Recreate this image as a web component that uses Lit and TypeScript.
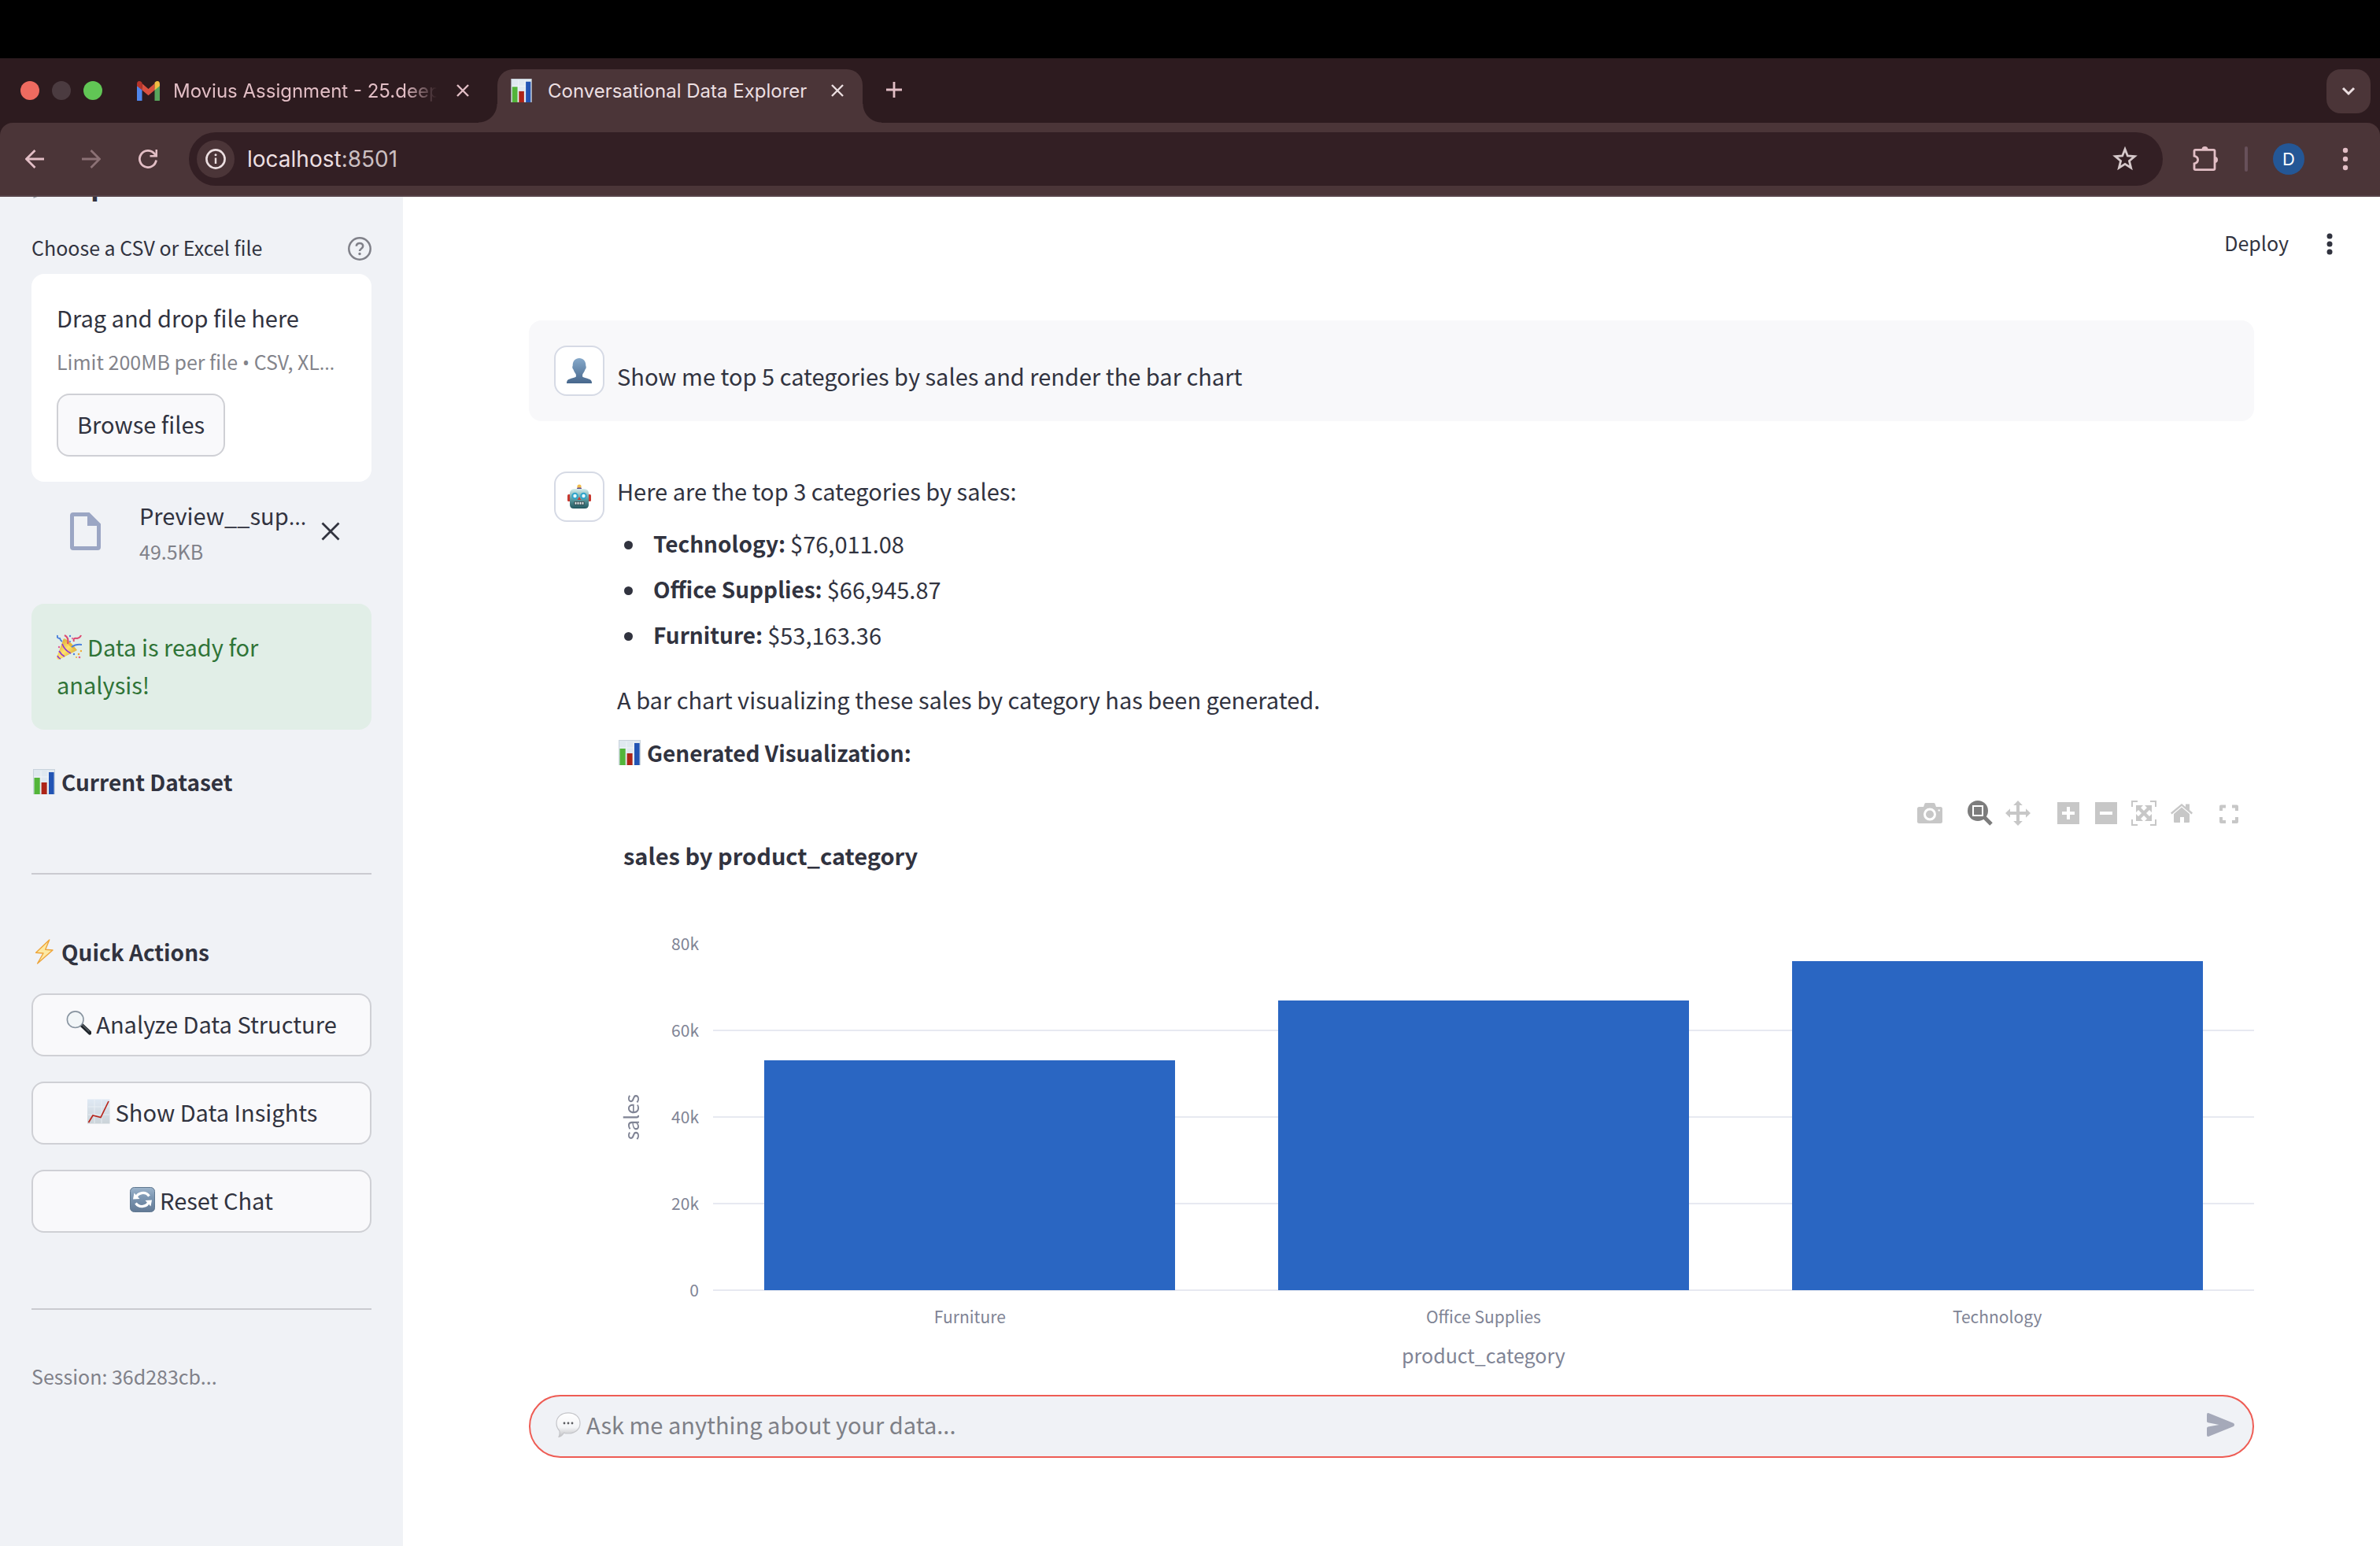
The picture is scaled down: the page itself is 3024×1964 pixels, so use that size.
import { LitElement, html, css, svg, TemplateResult } from "lit";
import { customElement } from "lit/decorators.js";

const ink = "#31333f";

/* Small colour pictograms, all on a 32 x 32 grid. */
const pictograms: Record<string, TemplateResult> = {
  chart: svg`
    <rect x="2.5" y="0.5" width="27" height="31" fill="#dfe8f0" stroke="#c9d3dc"/>
    <path d="M12 2v30M21 2v30M3 10h26M3 20h26" stroke="#f2f6fa" stroke-width="0.8"/>
    <rect x="3.5" y="11" width="7.2" height="21" fill="#53b53a"/>
    <rect x="12.6" y="17" width="7" height="15" fill="#ad2418"/>
    <rect x="22" y="4" width="6.6" height="28" fill="#2254b4"/>`,
  party: svg`
    <defs><linearGradient id="cone" x1="0" y1="0" x2="1" y2="1"><stop offset="0" stop-color="#c98f1b"/><stop offset="0.5" stop-color="#ffe36e"/><stop offset="1" stop-color="#c58a17"/></linearGradient></defs>
    <path d="M9 5 26 20 3 32Q0 32 0 29Z" fill="url(#cone)"/>
    <path d="M7 12q3 8 11 12M3 21q3 5 7 7M1 27q1 3 4 4" fill="none" stroke="#8a35d6" stroke-width="1.6"/>
    <path d="M10 5q8 4 16 15-11-3-16-15z" fill="#e8b83c"/>
    <path d="M10 1q6 3 4 11M22 9q-2-5 4-4 4-1 5-4" fill="none" stroke="#dc4a72" stroke-width="2"/>
    <path d="M1 1q-1 4 3 4 1 3 3 4M19 16q5-4 13-3" fill="none" stroke="#4a7fdc" stroke-width="2"/>
    <g fill="#4a7fdc"><circle cx="17" cy="2" r="1.2"/><circle cx="22" cy="25" r="1.2"/><circle cx="17" cy="9" r="1"/></g>
    <g fill="#f0a832"><circle cx="28" cy="25" r="1.3"/><circle cx="31" cy="21" r="1.2"/><circle cx="25" cy="29" r="1"/></g>
    <g fill="#e05a94"><circle cx="29" cy="29" r="1.3"/><circle cx="3" cy="16" r="1.2"/><circle cx="20" cy="5" r="1.1"/></g>`,
  bolt: svg`<path d="M22.7 1 5.6 17.3 15 18 7.6 31 27 14 17.7 13.3Z" fill="#fde9a2" stroke="#eda43a" stroke-width="1.4" stroke-linejoin="round"/>`,
  lens: svg`
    <path d="m20 18.5 10 9.5" stroke="#20262b" stroke-width="5" stroke-linecap="round"/>
    <path d="m21 18.5 8 7.5" stroke="#5d666d" stroke-width="1.2" stroke-linecap="round"/>
    <circle cx="11.7" cy="11.2" r="10.3" fill="#f2f6f8" stroke="#8894a0" stroke-width="1.6"/>`,
  trend: svg`
    <defs><linearGradient id="sheet" x1="0" y1="0" x2="0" y2="1"><stop offset="0" stop-color="#dfe9f4"/><stop offset="1" stop-color="#cbd3d8"/></linearGradient></defs>
    <rect x="2" y="0.5" width="28.5" height="31" fill="url(#sheet)"/>
    <path d="M11 1v30M20 1v30M3 10h27M3 20h27" stroke="#edf3f8" stroke-width="0.8"/>
    <path d="M3.5 30 9 21l10 2.6L29 3" fill="none" stroke="#b8261c" stroke-width="1.7"/>`,
  reset: svg`
    <defs><linearGradient id="key" x1="0" y1="0" x2="0" y2="1"><stop offset="0" stop-color="#9db4cb"/><stop offset="0.4" stop-color="#7d97b3"/><stop offset="1" stop-color="#627a96"/></linearGradient></defs>
    <rect x="0.5" y="0.5" width="31" height="31" rx="5" fill="url(#key)" stroke="#607890"/>
    <path d="M7.5 14.5C9.5 6.5 20 5 24.5 11.5M24.5 17.5C22.5 25.5 12 27 7.5 20.5" fill="none" stroke="#fff" stroke-width="3.2"/>
    <path d="M4 15.5 5.5 7.5l7 7.5zM28 16.5l-1.5 8-7-7.5z" fill="#fff"/>`,
  person: svg`
    <defs><linearGradient id="bust" x1="0" y1="0" x2="0" y2="1"><stop offset="0" stop-color="#86a9ca"/><stop offset="1" stop-color="#47678c"/></linearGradient></defs>
    <path d="M16 0c5 0 8.3 3.5 8.3 9 0 1.6.7 1.6.4 3-.3 1.5-1 2-1.3 2.6-.8 3-2.4 4.6-3.1 5.9-.3 1-.3 2.5 0 3.3 2 1.7 10.2 2.2 11.2 5.2.4 1.2.5 2 .5 3H0c0-1 .1-1.8.5-3 1-3 9.2-3.5 11.2-5.2.3-.8.3-2.3 0-3.3-.7-1.3-2.3-2.9-3.1-5.9-.3-.6-1-1.1-1.3-2.6-.3-1.4.4-1.4.4-3C7.7 3.5 11 0 16 0Z" fill="url(#bust)"/>`,
  robot: svg`
    <defs><linearGradient id="head" x1="0" y1="0" x2="0" y2="1"><stop offset="0" stop-color="#d9eeec"/><stop offset="0.5" stop-color="#5fa0a5"/><stop offset="1" stop-color="#22565e"/></linearGradient></defs>
    <circle cx="16" cy="3" r="2.6" fill="#f3bd4d"/><path d="M13.5 4.5h5L20 8h-8z" fill="#5d4a8c"/>
    <rect x="1" y="13" width="4" height="9" rx="1.5" fill="#c9382f"/><rect x="27" y="13" width="4" height="9" rx="1.5" fill="#c9382f"/>
    <path d="M9 6h14q5 1 5 6v14q0 5-5 5H9q-5 0-5-5V12q0-5 5-6z" fill="url(#head)"/>
    <circle cx="10.5" cy="15" r="4.2" fill="#2fa4cb"/><circle cx="21.5" cy="15" r="4.2" fill="#2fa4cb"/>
    <circle cx="10.5" cy="15" r="2.2" fill="#e8fbff"/><circle cx="21.5" cy="15" r="2.2" fill="#e8fbff"/>
    <path d="m16 16 2.2 4h-4.4z" fill="#c9382f"/>
    <rect x="9.5" y="22" width="13" height="4.5" rx="1" fill="#2b3c40"/>
    <path d="M10.5 24.2h11" stroke="#e4eef0" stroke-width="3" stroke-dasharray="2 1"/>`,
  bubble: svg`
    <defs><linearGradient id="balloon" x1="0" y1="0" x2="0" y2="1"><stop offset="0" stop-color="#fff"/><stop offset="0.6" stop-color="#f4f5f7"/><stop offset="1" stop-color="#bfc0c3"/></linearGradient></defs>
    <path d="M16 .8C24.5.8 31 6 31 14S24.500 27 16 27c-2 0-4-.2-5.500-.8C9 28.5 6.500 31 4 31.500c1-2 1.500-4.500.8-8C2.500 21 1 18 1 14 1 6 7.500.8 16 .8Z" fill="url(#balloon)" stroke="#c4c5c9" stroke-width="1.2"/>
    <g fill="#5d5e62"><circle cx="11" cy="14" r="1.4"/><circle cx="16" cy="14" r="1.4"/><circle cx="21" cy="14" r="1.4"/></g>`,
  folder: svg`<path d="M2 6h10l3 3h15v14L12 28l-10 4z" fill="#9aa0aa"/>`,
};

const pic = (name: string, size = 32) =>
  html`<svg class="pic" width=${size} height=${size} viewBox="0 0 32 32" aria-hidden="true">${pictograms[name]}</svg>`;

/* Chart toolbar buttons, in visual groups. */
const modebar: { label: string; active?: boolean; shape: TemplateResult }[][] = [
  [
    {
      label: "Download plot as a png",
      shape: svg`<path fill-rule="evenodd" d="M2.5 8H8l1.5-4.2Q10 3 11 3h10q1 0 1.5.8L24 8h5.5Q32 8 32 10.5v16q0 2.500-2.500 2.500h-27Q0 29 0 26.500v-16Q0 8 2.500 8ZM16 9.500a8 8 0 1 0 0 16 8 8 0 0 0 0-16Zm11.700 1.700a1.200 1.200 0 1 0 0 2.400 1.200 1.200 0 0 0 0-2.400Z"/><circle cx="16" cy="17.500" r="5"/>`,
    },
  ],
  [
    {
      label: "Zoom",
      active: true,
      shape: svg`<circle cx="13" cy="13" r="13"/><rect x="7" y="7" width="12" height="12" fill="none" stroke="#fff" stroke-width="2"/><path d="m20 20 10 10" stroke="currentColor" stroke-width="5"/>`,
    },
    {
      label: "Pan",
      shape: svg`<path d="m16 0 5.8 6H18v8h8v-3.8l6 5.8-6 5.8V18h-8v8h3.8L16 32l-5.8-6H14v-8H6v3.8L0 16l6-5.8V14h8V6h-3.8z"/>`,
    },
  ],
  [
    { label: "Zoom in", shape: svg`<path fill-rule="evenodd" d="M2 2h28v28H2zM14 8v6H8v4h6v6h4v-6h6v-4h-6V8z"/>` },
    { label: "Zoom out", shape: svg`<path fill-rule="evenodd" d="M2 2h28v28H2zM8 14v4h16v-4z"/>` },
    {
      label: "Autoscale",
      shape: svg`<path d="M1 8V1h7M24 1h7v7M31 24v7h-7M8 31H1v-7" fill="none" stroke="currentColor" stroke-width="2"/><path d="M6 6h9l-3 3 4 4 4-4-3-3h9v9l-3-3-4 4 4 4 3-3v9h-9l3-3-4-4-4 4 3 3H6v-9l3 3 4-4-4-4-3 3z"/>`,
    },
    {
      label: "Reset axes",
      shape: svg`<path d="M16 8.5 26 17v10q0 1-1 1h-6v-7h-5v7H7q-1 0-1-1V17zM16 4l5 4V4.500h5V12l4 3.500-1.500 2L16 7 3.500 17.500 2 15.500z"/>`,
    },
  ],
  [
    {
      label: "Fullscreen",
      shape: svg`<path d="M6 13V7.500h6M20 7.500h6V13M26 21v6h-6M12 27H6v-6" fill="none" stroke="currentColor" stroke-width="4" stroke-linejoin="round"/>`,
    },
  ],
];

const sales = [
  { category: "Furniture", value: 53163.36 },
  { category: "Office Supplies", value: 66945.87 },
  { category: "Technology", value: 76011.08 },
];
const axisMax = 80000;

@customElement("browser-chrome")
class BrowserChrome extends LitElement {
  static styles = css`
    :host { display: block; flex: none; background: #2d1b1f; font-family: Inter, "Liberation Sans", sans-serif; color: #ecdfe1; }
    button { border: 0; padding: 0; background: none; color: inherit; font: inherit; display: flex; align-items: center; justify-content: center; }
    svg { display: block; flex: none; }
    .menubar { height: 74px; background: #000; }
    .strip { display: flex; height: 68px; padding: 14px 12px 0 26px; }
    .lights { display: flex; align-items: center; gap: 16px; height: 54px; margin-right: 44px; }
    .light { width: 24px; height: 24px; border-radius: 50%; background: #4b3b40; }
    .close { background: #ee6b60; }
    .grow { background: #61c655; }
    .tab { display: flex; align-items: center; box-sizing: border-box; height: 68px; padding-bottom: 14px; font-size: 24px; line-height: 32px; white-space: nowrap; color: #e2bec5; }
    .name { flex: 1; padding-top: 2px; }
    .idle { width: 458px; gap: 17px; padding-right: 36px; }
    .idle .name { overflow: hidden; mask-image: linear-gradient(90deg, #000 88%, transparent 100%); }
    .idle .shut { margin-left: 8px; }
    .open { position: relative; width: 464px; padding-left: 17px; padding-right: 24px; border-radius: 20px 20px 0 0; background: #4b3538; color: #ecdfe1; }
    .open .name { margin-left: 20px; }
    .open::before, .open::after { content: ""; position: absolute; bottom: 0; width: 24px; height: 24px; }
    .open::before { right: 100%; background: radial-gradient(circle at 0 0, transparent 23px, #4b3538 24px); }
    .open::after { left: 100%; background: radial-gradient(circle at 100% 0, transparent 23px, #4b3538 24px); }
    .add { height: 52px; margin-left: 30px; color: #e2bec5; }
    .list { width: 56px; height: 56px; margin-left: auto; border-radius: 18px; background: #4b3538; }
    .toolbar { display: flex; align-items: center; height: 92px; padding: 0 40px 0 32px; border-radius: 16px 16px 0 0; border-bottom: 2px solid #574449; background: #4b3538; color: #e2bec5; }
    .nav { display: flex; gap: 48px; margin-right: 40px; }
    .off { color: #8b7175; }
    .omnibox { display: flex; flex: 1; align-items: center; height: 68px; padding: 0 32px 0 10px; border-radius: 34px; background: #331f24; }
    .info { width: 48px; height: 48px; border-radius: 50%; background: #4b3538; color: #ecdfe1; }
    .url { flex: 1; margin-left: 16px; font-size: 28px; line-height: 40px; color: #ecdfe1; text-decoration: none; }
    .port { color: #cbbfc1; }
    .star { color: #d5c8ca; }
    .puzzle { margin-left: 37px; }
    .rule { width: 4px; height: 32px; margin: 0 32px 0 33px; border-radius: 2px; background: #67505a; }
    .avatar { width: 40px; height: 40px; margin-right: 48px; border-radius: 50%; background: #245796; color: #fff; font-size: 22px; }
  `;

  private cross = html`<svg width="16" height="16" viewBox="0 0 16 16" aria-hidden="true"><path d="m1 1 14 14M15 1 1 15" stroke="currentColor" stroke-width="2.4"/></svg>`;

  render() {
    return html`
      <div class="menubar"></div>
      <div class="strip">
        <div class="lights">
          <button class="light close" aria-label="Close window"></button>
          <button class="light" aria-label="Minimize window"></button>
          <button class="light grow" aria-label="Zoom window"></button>
        </div>
        <div class="tab idle">
          <svg width="29" height="26" viewBox="0 -2 29 26" aria-hidden="true">
            <path d="M0 5v18q0 2 2 2h4.500V8z" fill="#4f86ec"/>
            <path d="M29 5v18q0 2-2 2h-4.500V8z" fill="#58a55c"/>
            <path d="M6.500 2 14.500 9l8-7v8.500l-8 6.700-8-6.700z" fill="#d95040"/>
            <path d="M0 3Q0-1 3-1q1.500 0 2.500 1l1 1V10.500L0 5.300z" fill="#b5342a"/>
            <path d="M29 3Q29-1 26-1q-1.500 0-2.500 1l-1 1V10.500L29 5.300z" fill="#f1bd42"/>
          </svg>
          <span class="name">Movius Assignment - 25.deep</span>
          <button class="shut" aria-label="Close tab">${this.cross}</button>
        </div>
        <div class="tab open">
          <svg width="27" height="30" viewBox="2 0 28 32" aria-hidden="true">${pictograms.chart}</svg>
          <span class="name">Conversational Data Explorer</span>
          <button aria-label="Close tab">${this.cross}</button>
        </div>
        <button class="add" aria-label="New tab">
          <svg width="20" height="20" viewBox="0 0 20 20"><path d="M10 0v20M0 10h20" stroke="currentColor" stroke-width="2.8"/></svg>
        </button>
        <button class="list" aria-label="Search tabs">
          <svg width="18" height="12" viewBox="0 0 18 12"><path d="m2 2 7 7 7-7" fill="none" stroke="#ecdfe1" stroke-width="3"/></svg>
        </button>
      </div>
      <div class="toolbar">
        <div class="nav">
          <button aria-label="Back"><svg width="24" height="24" viewBox="0 0 24 24"><path d="M24 12H2.500M12.500 1 1.500 12l11 11" fill="none" stroke="currentColor" stroke-width="2.8"/></svg></button>
          <button class="off" aria-label="Forward"><svg width="24" height="24" viewBox="0 0 24 24"><path d="M0 12h21.500M11.500 1l11 11-11 11" fill="none" stroke="currentColor" stroke-width="2.8"/></svg></button>
          <button aria-label="Reload"><svg width="24" height="24" viewBox="0 0 24 24"><path d="M22.500 13.500A10.600 10.600 0 1 1 20 5l2 2" fill="none" stroke="currentColor" stroke-width="2.8"/><path d="M24 0v9.500h-9.500V7h7V0z" fill="currentColor"/></svg></button>
        </div>
        <div class="omnibox">
          <button class="info" aria-label="View site information">
            <svg width="26" height="26" viewBox="0 0 26 26"><circle cx="13" cy="13" r="11.6" fill="none" stroke="currentColor" stroke-width="2.6"/><path d="M13 11.500V19" stroke="currentColor" stroke-width="2.4"/><circle cx="13" cy="7.8" r="1.5" fill="currentColor"/></svg>
          </button>
          <a class="url" href="http://localhost:8501">localhost<span class="port">:8501</span></a>
          <button class="star" aria-label="Bookmark this tab">
            <svg width="32" height="32" viewBox="0 0 32 32"><path d="m16 3.500 3.300 8.400 9 .7-6.900 5.800 2.200 8.800-7.600-4.800-7.600 4.800 2.200-8.800-6.900-5.800 9-.7z" fill="none" stroke="currentColor" stroke-width="2.8"/></svg>
          </button>
        </div>
        <button class="puzzle" aria-label="Extensions">
          <svg width="34" height="34" viewBox="0 0 34 34"><path d="M3 13.200V7q0-1.600 1.600-1.600h22.800Q29 5.400 29 7v22q0 1.600-1.600 1.600H4.600Q3 30.600 3 29v-6.200q4.600-1.200 4.600-4.800T3 13.200Z" fill="none" stroke="currentColor" stroke-width="2.8"/><path d="M12.500 5a4 4 0 0 1 8 0zM29 14a4 4 0 0 1 0 8z" fill="currentColor"/></svg>
        </button>
        <span class="rule"></span>
        <button class="avatar" aria-label="Profile">D</button>
        <button aria-label="Browser menu"><svg width="8" height="30" viewBox="0 0 8 30" fill="currentColor"><circle cx="4" cy="4" r="3.2"/><circle cx="4" cy="15" r="3.2"/><circle cx="4" cy="26" r="3.2"/></svg></button>
      </div>
    `;
  }
}

const sourceText = css`
  :host { font-family: "Noto Sans CJK SC", "Noto Sans", sans-serif; font-size: 29px; line-height: 48px; color: #31333f; }
  button { font: inherit; color: inherit; }
  svg { display: block; flex: none; }
  h2, h3, p, ul { margin: 0; padding: 0; }
  h3 { display: flex; align-items: center; gap: 6px; font-size: 28px; line-height: 48px; font-weight: 700; }
`;

@customElement("side-panel")
class SidePanel extends LitElement {
  static styles = [
    sourceText,
    css`
      :host { display: block; flex: none; box-sizing: border-box; width: 512px; padding: 0 40px; overflow: hidden; background: #f0f2f6; }
      .title { display: flex; align-items: center; gap: 8px; margin-top: -42px; font-size: 36px; line-height: 48px; }
      .field { display: flex; justify-content: space-between; height: 30px; margin-top: 45px; font-size: 25px; line-height: 26px; }
      .help { border: 0; padding: 0; background: none; color: #808189; }
      .drop { margin-top: 17px; padding: 32px; border-radius: 16px; background: #fff; }
      .lead { line-height: 46px; }
      .hint { margin-top: 12px; font-size: 25px; line-height: 42px; color: #83848b; white-space: nowrap; }
      .dots { font-family: "Open Sans", "Noto Sans", sans-serif; line-height: 0; }
      .btn { display: flex; align-items: center; justify-content: center; gap: 6px; box-sizing: border-box; height: 80px; padding: 0 24px 4px; border: 2px solid #cfd0d5; border-radius: 16px; background: #f9f9fb; white-space: nowrap; }
      .browse { margin-top: 20px; }
      .file { display: flex; align-items: center; margin-top: 19px; padding: 0 40px 0 48px; }
      .meta { flex: 1; margin-left: 49px; white-space: nowrap; }
      .size { margin-top: 5px; font-size: 25px; line-height: 36px; color: #808189; }
      .remove { border: 0; padding: 0; background: none; }
      .ready { margin-top: 49px; padding: 30px 32px 34px; border-radius: 16px; background: #e1eee7; color: #2f7437; }
      .ready .pic { display: inline-block; margin-right: 7px; vertical-align: -4px; }
      .dataset { margin-top: 42px; }
      .line { height: 2px; margin: 92px 0 0; border: 0; background: #cacbd0; }
      .quick { margin-top: 74px; }
      .actions { display: grid; gap: 32px; margin-top: 29px; }
      .last { margin-top: 96px; }
      .session { margin-top: 64px; font-size: 25px; line-height: 40px; color: #808189; }
    `,
  ];

  render() {
    return html`
      <h2 class="title">${pic("folder", 40)}Upload</h2>
      <div class="field">
        <span id="file-label">Choose a CSV or Excel file</span>
        <button class="help" aria-label="Help">
          <svg width="30" height="30" viewBox="0 0 30 30"><circle cx="15" cy="15" r="13.7" fill="none" stroke="currentColor" stroke-width="2.5"/><path d="M10.800 11.800Q11 8 15 8t4.200 3.600Q19.200 13.500 17 15q-2 1.400-2 3" fill="none" stroke="currentColor" stroke-width="2.6"/><circle cx="15" cy="21.5" r="1.7" fill="currentColor"/></svg>
        </button>
      </div>
      <section class="drop" aria-labelledby="file-label">
        <p class="lead">Drag and drop file here</p>
        <p class="hint">Limit 200MB per file <span class="dots">•</span> CSV, XL<span class="dots">…</span></p>
        <button class="btn browse">Browse files</button>
      </section>
      <div class="file">
        <svg width="40" height="50" viewBox="0 0 40 50"><path fill-rule="evenodd" d="M5 1h20.500L40 15.500V45q0 4-4 4H5q-4 0-4-4V5q0-4 4-4Zm1 5v38h29V18H23V6z" fill="#9ba6c4"/></svg>
        <div class="meta">
          <p class="lead">Preview__sup<span class="dots">…</span></p>
          <p class="size">49.5KB</p>
        </div>
        <button class="remove" aria-label="Remove file">
          <svg width="24" height="24" viewBox="0 0 24 24"><path d="m1.500 1.500 21 21M22.500 1.500l-21 21" stroke="currentColor" stroke-width="2.8"/></svg>
        </button>
      </div>
      <p class="ready">${pic("party")}Data is ready for analysis!</p>
      <h3 class="dataset">${pic("chart")}Current Dataset</h3>
      <hr class="line" />
      <h3 class="quick">${pic("bolt")}Quick Actions</h3>
      <div class="actions">
        <button class="btn">${pic("lens")}Analyze Data Structure</button>
        <button class="btn">${pic("trend")}Show Data Insights</button>
        <button class="btn">${pic("reset")}Reset Chat</button>
      </div>
      <hr class="line last" />
      <p class="session">Session: 36d283cb...</p>
    `;
  }
}

@customElement("sales-chart")
class SalesChart extends LitElement {
  static styles = [
    sourceText,
    css`
      :host { display: block; }
      .modebar { display: flex; justify-content: flex-end; gap: 16px; margin-top: 29px; padding-right: 8px; }
      .group { display: flex; }
      .group:last-child { margin-left: -4px; }
      .tool { display: flex; align-items: center; justify-content: center; width: 48px; height: 48px; padding: 0; border: 0; background: none; color: #c7c7c7; }
      .active { color: #7c7c7c; }
      .caption { padding-left: 8px; margin-top: 5px; font-size: 29px; }
      .figure { display: grid; grid-template-columns: 34px 70px minmax(0, 1fr); margin-top: 89px; color: #808495; }
      .yname { align-self: center; justify-self: center; font-size: 25px; line-height: 34px; writing-mode: vertical-rl; transform: rotate(180deg); }
      .ticks { display: flex; flex-direction: column; justify-content: space-between; margin: -16px 0 -14px; font-size: 21px; line-height: 30px; text-align: right; }
      .plot { display: grid; height: 440px; margin-left: 18px; }
      .rules, .bars { grid-area: 1 / 1; }
      .rules { display: grid; grid-template-rows: repeat(4, 110px); padding-top: 1px; }
      .rule { border-bottom: 2px solid #e7e9f1; }
      .bars { display: grid; grid-template-columns: repeat(3, 1fr); align-items: end; justify-items: center; height: 440px; }
      .bar { width: 80%; background: #2a66c2; }
      .names { display: grid; grid-column: 3; grid-template-columns: repeat(3, 1fr); margin: 18px 0 0 18px; font-size: 21px; line-height: 30px; text-align: center; }
      .xname { grid-column: 3; margin: 14px 0 0 18px; font-size: 25px; line-height: 40px; text-align: center; }
    `,
  ];

  render() {
    return html`
      <div class="modebar">
        ${modebar.map(
          (group) => html`<div class="group">
            ${group.map(
              (tool) => html`<button class="tool ${tool.active ? "active" : ""}" aria-label=${tool.label}>
                <svg width="32" height="32" viewBox="0 0 32 32" fill="currentColor">${tool.shape}</svg>
              </button>`
            )}
          </div>`
        )}
      </div>
      <h3 class="caption">sales by product_category</h3>
      <div class="figure">
        <span class="yname">sales</span>
        <div class="ticks">${["80k", "60k", "40k", "20k", "0"].map((t) => html`<span>${t}</span>`)}</div>
        <div class="plot">
          <div class="rules">${[60, 40, 20, 0].map(() => html`<span class="rule"></span>`)}</div>
          <div class="bars">
            ${sales.map((s) => html`<div class="bar" style="height:${(s.value / axisMax) * 100}%"></div>`)}
          </div>
        </div>
        <div class="names">${sales.map((s) => html`<span>${s.category}</span>`)}</div>
        <span class="xname">product_category</span>
      </div>
    `;
  }
}

@customElement("app-root")
class AppRoot extends LitElement {
  static styles = [
    sourceText,
    css`
      :host { display: flex; flex-direction: column; min-height: 100vh; background: #fff; }
      .body { display: flex; flex: 1; }
      main { display: flex; flex: 1; flex-direction: column; min-width: 0; }
      header { display: flex; align-items: center; justify-content: flex-end; gap: 28px; padding: 36px 40px 0 0; }
      .plain { display: flex; align-items: center; justify-content: center; height: 48px; padding: 0; border: 0; background: none; font-size: 25px; }
      .deploy { padding-bottom: 4px; }
      .more { width: 48px; }
      .thread { display: grid; gap: 32px; padding: 0 160px; margin-top: 73px; }
      .message { display: flex; gap: 16px; padding: 32px 0 0 32px; border-radius: 16px; }
      .user { height: 64px; padding: 32px; background: #f8f8fa; }
      .user .text { padding-top: 14px; }
      .face { display: flex; flex: none; align-items: center; justify-content: center; box-sizing: border-box; width: 64px; height: 64px; border: 2px solid #d6dae5; border-radius: 16px; background: #fff; }
      .text { flex: 1; min-width: 0; }
      ul { display: grid; gap: 10px; margin-top: 19px; list-style: none; }
      li { display: flex; align-items: center; padding-left: 9px; }
      li::before { content: ""; width: 11px; height: 11px; margin: 5px 26px 0 0; border-radius: 50%; background: #31333f; }
      li b { margin-right: 6px; font-size: 28px; }
      .after { margin-top: 34px; }
      .heading { margin-top: 20px; }
      .compose { margin-top: auto; padding: 0 160px 112px; }
      .pill { display: flex; align-items: center; gap: 7px; box-sizing: border-box; height: 80px; padding: 0 22px 4px 32px; border: 2px solid #ee5c54; border-radius: 40px; background: #f0f2f6; }
      input { flex: 1; min-width: 0; height: 48px; padding: 0 0 2px; border: 0; outline: 0; background: none; font: inherit; color: #31333f; }
      input::placeholder { color: #7e8087; opacity: 1; }
      .send { padding: 0; border: 0; background: none; }
    `,
  ];

  render() {
    return html`
      <browser-chrome></browser-chrome>
      <div class="body">
        <side-panel></side-panel>
        <main>
          <header>
            <button class="plain deploy">Deploy</button>
            <button class="plain more" aria-label="App menu">
              <svg width="8" height="28" viewBox="0 0 8 28" fill=${ink}><circle cx="4" cy="4" r="3.5"/><circle cx="4" cy="14" r="3.5"/><circle cx="4" cy="24" r="3.5"/></svg>
            </button>
          </header>
          <div class="thread">
            <article class="message user">
              <div class="face">${pic("person")}</div>
              <p class="text">Show me top 5 categories by sales and render the bar chart</p>
            </article>
            <article class="message">
              <div class="face">${pic("robot")}</div>
              <div class="text">
                <p>Here are the top 3 categories by sales:</p>
                <ul>
                  <li><b>Technology:</b>$76,011.08</li>
                  <li><b>Office Supplies:</b>$66,945.87</li>
                  <li><b>Furniture:</b>$53,163.36</li>
                </ul>
                <p class="after">A bar chart visualizing these sales by category has been generated.</p>
                <h3 class="heading">${pic("chart")}Generated Visualization:</h3>
                <sales-chart></sales-chart>
              </div>
            </article>
          </div>
          <div class="compose">
            <div class="pill">
              ${pic("bubble")}
              <input type="text" aria-label="Chat message" placeholder="Ask me anything about your data..." />
              <button class="send" aria-label="Send message">
                <svg width="36" height="30" viewBox="0 0 36 30"><path d="M2.500.3 34 13q2 1.900 0 3.900L2.500 29.700Q0 30.500 0 28v-8.500q0-1.600 1.600-2L15.500 15 1.600 12.300Q0 12 0 10.400V2Q0-.5 2.500.3Z" fill="#a5a9b9"/></svg>
              </button>
            </div>
          </div>
        </main>
      </div>
    `;
  }
}
